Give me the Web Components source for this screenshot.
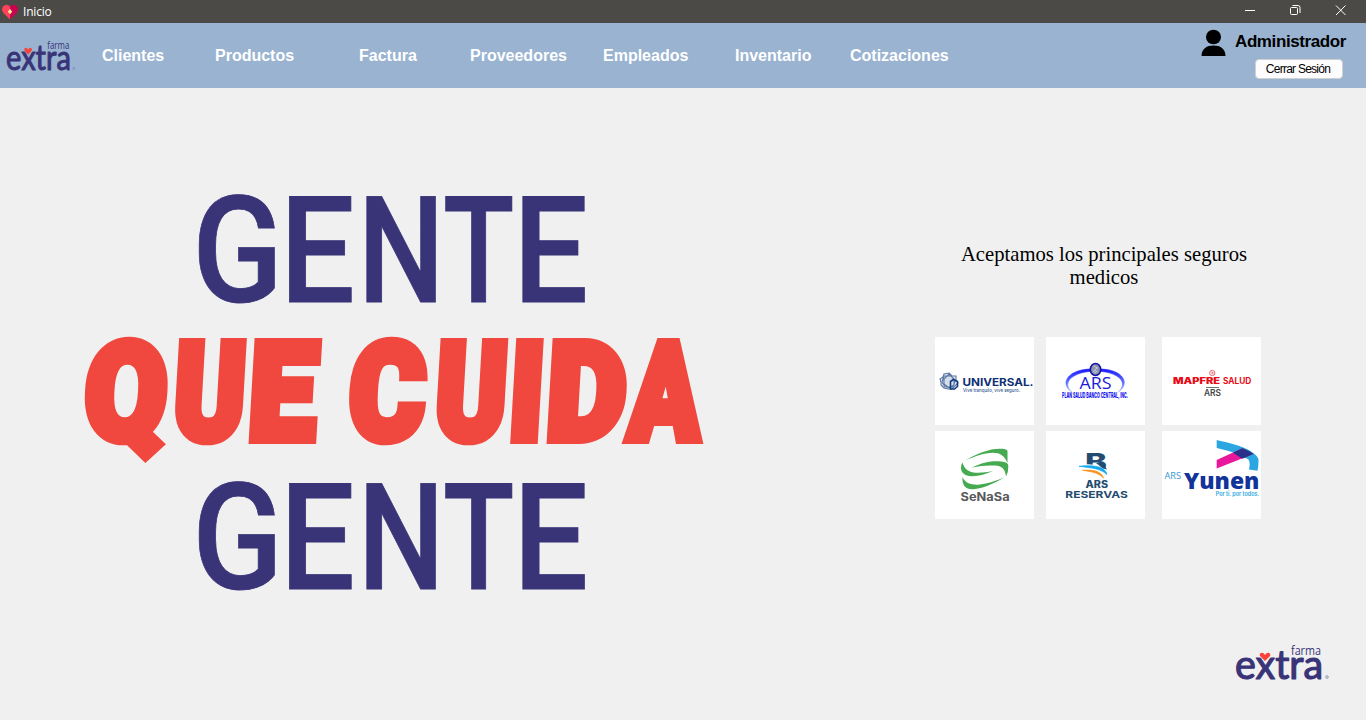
<!DOCTYPE html>
<html lang="es">
<head>
<meta charset="utf-8">
<title>Inicio</title>
<style>
html,body{margin:0;height:100%;overflow:hidden;background:#f0f0f0}
</style>
</head>
<body>
<app-window></app-window>
<script>
const define = (name, html, init) => {
  const tpl = document.createElement('template');
  tpl.innerHTML = html;
  customElements.define(name, class extends HTMLElement {
    constructor() {
      super();
      this.attachShadow({mode: 'open'}).append(tpl.content.cloneNode(true));
    }
    connectedCallback() { if (init) init(this); }
  });
};

define('title-bar', `<style>
:host{display:flex;height:23px;background:#4b4a47;color:#fff;align-items:center;font:12px "Open Sans","Noto Sans",sans-serif;box-sizing:border-box;padding-left:2px}
.name{margin-left:5px;flex:1;line-height:23px;letter-spacing:-.2px}
.ctl{display:flex;width:137px;height:23px}
.ctl svg{display:block}
</style>
<svg width="16" height="16" viewBox="0 0 16 16"><path d="M8 15.5L1.5 9Q-1.2 5.5 1 2.4Q4.500-1 8 2.500z" fill="#ff4257"/><path d="M8 15.500L14.500 9Q17.200 5.500 15 2.400Q11.500-1 8 2.500z" fill="#c9034f"/><path d="M7.200 5.500h1.800v1.200h1v1.800H9v1.200H7.200V8.500H6V6.700h1.200z" fill="#ffeb9c"/></svg>
<span class="name"><slot></slot></span>
<div class="ctl"><svg width="137" height="23" viewBox="0 0 137 23" fill="none" stroke="#fff" stroke-width="1"><path d="M16 10.500h10"/><rect x="61.500" y="7.500" width="7" height="7" rx="1"/><path d="M63.500 5.500h5.500q2 0 2 2v5.500"/><path d="M107 5.500l9.500 9.500M116.500 5.500l-9.500 9.500"/></svg></div>`);

define('extra-logo', `<style>
:host{display:block}
svg{display:block;width:100%;height:100%;overflow:visible}
text{fill:#393478}
</style>
<svg viewBox="0 0 93 36" preserveAspectRatio="none">
<text x="0" y="33.700" font-family="Lato,sans-serif" font-weight="400" font-size="40" stroke="#393478" stroke-width="1.200" stroke-linejoin="round" textLength="88" lengthAdjust="spacingAndGlyphs">extra</text>
<text x="56" y="9.500" font-family="'Open Sans',sans-serif" font-size="12" textLength="30" lengthAdjust="spacingAndGlyphs">farma</text>
<circle cx="92" cy="32" r="1.300" fill="none" stroke="#8580ad" stroke-width=".8"/>
<path d="M30 16L25 11Q24 8.200 26.500 7.700Q29 7.700 30 10Q31 7.700 33.500 7.700Q36 8.200 35 11z" fill="#fa423b"/>
</svg>`);

define('nav-item', `<style>:host{display:block;color:#fff;font:bold 16px/20px "Liberation Sans",Arial,sans-serif;white-space:nowrap}</style><slot></slot>`);

define('user-panel', `<style>
:host{display:grid;grid-template-columns:34px 1fr;width:165px;height:65px;box-sizing:border-box;padding-top:5px}
svg{display:block}
.who{font:bold 17px/20px "Liberation Sans",Arial,sans-serif;color:#000;letter-spacing:-.4px;padding-top:4px;white-space:nowrap}
button{display:block;box-sizing:border-box;width:88px;height:20px;margin:7px 0 0 20px;padding:0 2px 0 0;border:1px solid #d0d0d0;border-radius:4px;background:#fdfdfd;color:#000;font:12px/18px "Liberation Sans",Arial,sans-serif;letter-spacing:-.75px}
.right{display:flex;flex-direction:column}
</style>
<svg width="26" height="30" viewBox="0 0 26 30"><ellipse cx="12.500" cy="9" rx="7.500" ry="7.300"/><path d="M.5 28C.5 20.500 6 17.500 12.500 17.500S24.500 20.500 24.500 28z"/></svg>
<div class="right"><div class="who"><slot></slot></div><button>Cerrar Sesión</button></div>`);

define('nav-bar', `<style>
:host{display:flex;height:65px;background:#99b3d1;box-sizing:border-box;padding-left:6px}
extra-logo{width:68.500px;height:31px;margin-top:18px}
nav{display:grid;grid-template-columns:113px 144px 111px 133px 132px 115px 110px;margin-left:27.500px;padding-top:23px;flex:1}
</style>
<extra-logo></extra-logo>
<nav><nav-item>Clientes</nav-item><nav-item>Productos</nav-item><nav-item>Factura</nav-item><nav-item>Proveedores</nav-item><nav-item>Empleados</nav-item><nav-item>Inventario</nav-item><nav-item>Cotizaciones</nav-item></nav>
<user-panel>Administrador</user-panel>`);

/* Each letter of a line is stretched to an ink box: "left,right" pairs, "_" for a space. */
define('hero-slogan', `<style>
:host{display:block}
svg{display:block;overflow:visible}
text{font-family:Roboto,sans-serif;stroke-linejoin:miter}
</style>
<svg width="640" height="420" viewBox="70 180 640 420">
<text data-y="302" data-w="500" data-size="149" data-stroke="0.8" fill="#393478" stroke="#393478" data-box="198,275.500 288.300,352.500 365.700,436 445,512.700 521.700,585.700">GENTE</text>
<text data-y="444.200" data-w="900" data-size="135" data-stroke="10" data-skew="-3.300" fill="#f0483e" stroke="#f0483e" data-box="81,165.500 171.500,242.500 248,317.500 _ 345.500,425.500 433,504 509,539 546,624.500 621.700,703.700">QUE CUIDA</text>
<text data-y="589" data-w="500" data-size="149" data-stroke="0.8" fill="#393478" stroke="#393478" data-box="198,275.500 288.300,352.500 365.700,436 445,512.700 521.700,585.700">GENTE</text>
</svg>`, host => {
  const ctx = document.createElement('canvas').getContext('2d');
  host.shadowRoot.querySelectorAll('text').forEach(t => {
    const d = t.dataset, s = +d.stroke, chars = [...t.textContent], boxes = d.box.split(' ');
    ctx.font = `${d.w} ${d.size}px Roboto`;
    t.textContent = '';
    t.setAttribute('transform', `translate(0 ${+d.y - s / 2}) skewX(${d.skew || 0})`);
    t.setAttribute('font-size', d.size);
    t.setAttribute('font-weight', d.w);
    t.setAttribute('stroke-width', s);
    chars.forEach((c, i) => {
      if (c === ' ') { t.append(' '); return; }
      const [l, r] = boxes[i].split(',').map(Number);
      const m = ctx.measureText(c);
      const k = (r - l - s) / (m.actualBoundingBoxRight + m.actualBoundingBoxLeft);
      const e = document.createElementNS('http://www.w3.org/2000/svg', 'tspan');
      e.textContent = c;
      e.setAttribute('x', l + s / 2 + m.actualBoundingBoxLeft * k);
      e.setAttribute('textLength', m.width * k);
      e.setAttribute('lengthAdjust', 'spacingAndGlyphs');
      t.append(e);
    });
  });
});

define('insurer-card', `<style>:host{display:block;width:99px;height:88px;background:#fff}::slotted(svg){display:block}</style><slot></slot>`);

define('insurer-panel', `<style>
:host{display:block;width:346px}
p{margin:0 8px 0 0;font:20.650px/23px "Liberation Serif","Times New Roman",serif;text-align:center;color:#000;white-space:nowrap}
.grid{display:grid;grid-template-columns:111px 116px 99px;grid-auto-rows:88px;row-gap:6px;margin-top:48px}
text{font-family:Inter,sans-serif}
</style>
<p>Aceptamos los principales seguros<br>medicos</p>
<div class="grid">
<insurer-card><svg width="99" height="88">
<g fill="#c5d1e4" fill-opacity=".5" stroke="#5a76a4" stroke-width="1.100"><path d="M14 36l3 3 4 0v4l2 3-3 3-3 3-4 0-4-1-3-3 0-3-1-3 3-2 1-3z"/><path d="M9 39h7l4 5-2 6h-8l-3-5zM14 37l5 5v6l-5 3-5-4v-5z"/></g>
<path d="M15.500 44.500l3-2 4 2v5l-3 2.500h-4z" fill="none" stroke="#123c7e" stroke-width="1.600"/>
<text x="27.500" y="49" font-size="10.300" font-weight="700" fill="#0d2f73" textLength="71" lengthAdjust="spacingAndGlyphs">UNIVERSAL.</text>
<text x="28" y="54.800" font-size="5" font-weight="500" fill="#34558e" textLength="57" lengthAdjust="spacingAndGlyphs">Vive tranquilo, vive seguro.</text></svg></insurer-card>
<insurer-card><svg width="99" height="88">
<defs><linearGradient id="ring" x2="0" y2="1"><stop offset="0" stop-color="#1717ff"/><stop offset=".6" stop-color="#5f70ff"/><stop offset="1" stop-color="#b5c4ff"/></linearGradient></defs>
<path d="M26 55C15 49 18 33 45 32H54C81 33 83 49 72 55C82 47 75 36 54 34.300H45C24 36 16 47 26 55z" fill="url(#ring)" stroke="url(#ring)" stroke-width=".7"/>
<ellipse cx="49.500" cy="32.500" rx="5.200" ry="6" fill="#8d93ad" stroke="#1111a8" stroke-width="1.600"/><path d="M47.500 29l4 2-3 2 3 2M47 34l3 2" fill="none" stroke="#d5d7df" stroke-width=".8"/>
<text x="33.500" y="52" font-size="17" style="font-family:'Open Sans'" fill="#1a1ad8" textLength="32" lengthAdjust="spacingAndGlyphs">ARS</text>
<text x="16" y="61.400" font-size="7.800" font-weight="800" fill="#1414ef" textLength="66" lengthAdjust="spacingAndGlyphs">PLAN SALUD BANCO CENTRAL, INC.</text></svg></insurer-card>
<insurer-card><svg width="99" height="88">
<circle cx="50.300" cy="36" r="2.700" fill="none" stroke="#eb6670" stroke-width=".9"/><path d="M48.500 35h2v2h2M49 37.500l3-3" stroke="#eb6670" stroke-width=".7" fill="none"/>
<text x="11" y="47.300" font-size="8.300" font-weight="900" fill="#e80b17" textLength="47" lengthAdjust="spacingAndGlyphs">MAPFRE</text>
<text x="61" y="47.300" font-size="8.300" font-weight="700" fill="#e80b17" textLength="28.300" lengthAdjust="spacingAndGlyphs">SALUD</text>
<path d="M44 50.500h13" stroke="#69746f"/>
<text x="42" y="59" font-size="8.300" font-weight="600" fill="#454545" textLength="17" lengthAdjust="spacingAndGlyphs">ARS</text></svg></insurer-card>
<insurer-card><svg width="99" height="88">
<g fill="#45aa50"><path d="M30 29.500C43 22 56 17 67 17.800Q72 18 72.500 20V32C69 24 65 22 58 21.800C49 22 41 25 30 29.500z"/><path d="M27.500 31.500C29 38 34 41.500 41 41.700C47 42 52 41 58 40C50 43.500 42 46 34 45Q26 43.500 26 37Q25.800 34 27.500 31.500z"/><path d="M37 36.500C48 31 58 29.500 66 30.500Q74 31 73.300 35.500Q73.500 41 71 45.500C70 38 67 35 60 34.600C52 34 45 35 37 36.500z"/><path d="M27.500 46C30 52 36 54 43 53.700C52 53 60 50 69.500 46.500C58 53 48 57.500 38 58.200Q26.500 58.500 27.500 46z"/></g>
<text x="25.600" y="69.800" font-size="12" font-weight="700" fill="#58595b" textLength="49" lengthAdjust="spacingAndGlyphs">SeNaSa</text></svg></insurer-card>
<insurer-card><svg width="99" height="88">
<text x="39" y="38.500" font-size="23" font-weight="800" fill="#234c70" textLength="22" lengthAdjust="spacingAndGlyphs">B</text>
<path d="M32 34Q53 31 61.500 39.500V44L38 42z" fill="#fff"/><path d="M50 32h5q4 2 6 6.500l-4-1z" fill="#234c70"/>
<path d="M33 35.300C47 34 59 35 61 43.500C55 37.500 46 37 33 35.300z" fill="#14a9ef" stroke="#14a9ef" stroke-width=".8"/>
<path d="M36.500 39.300C47 38.500 55 40 57.500 47C52 41.500 47 41 36.500 39.300z" fill="#f99223" stroke="#f99223" stroke-width=".8"/>
<text x="39.500" y="57" font-size="9.700" font-weight="800" fill="#234c70" textLength="22.500" lengthAdjust="spacingAndGlyphs">ARS</text>
<text x="19.300" y="66.700" font-size="9.500" font-weight="700" fill="#234c70" textLength="62.500" lengthAdjust="spacingAndGlyphs">RESERVAS</text></svg></insurer-card>
<insurer-card><svg width="99" height="88">
<path d="M54.700 9C68 12 80 15 88 19.700Q97 25 96.500 30Q96.500 35 95.500 39.700L87 38.500Q88.500 32 86.500 28.500Q77 22 54.700 17z" fill="#2aa6e0"/>
<path d="M54.700 29L80.300 17.300L91.300 23L54.700 37.500z" fill="#e9179b"/><path d="M71 21.700L80.300 17.300Q86 19 91.300 23L80.300 27.800z" fill="#2b3186"/>
<text x="2.500" y="48" font-size="9.300" style="font-family:'Open Sans'" fill="#3498d3" textLength="16.500" lengthAdjust="spacingAndGlyphs">ARS</text>
<text x="22" y="57.700" font-size="22" style="font-family:'Open Sans'" font-weight="800" fill="#11339a" textLength="75.500" lengthAdjust="spacingAndGlyphs">Yunen</text>
<text x="53.700" y="64.700" font-size="5.500" font-weight="600" fill="#2aa6e0" textLength="43.500" lengthAdjust="spacingAndGlyphs">Por ti. por todos.</text></svg></insurer-card>
</div>`);

define('app-window', `<style>
:host{display:flex;flex-direction:column;height:720px;width:1366px;background:#f0f0f0}
main{flex:1;display:grid;grid-template-columns:865px 346px;padding:92px 0 0 70px;box-sizing:border-box;grid-template-rows:420px}
insurer-panel{padding-top:63px}
footer{display:flex;justify-content:flex-end;padding:0 38px 39px 0}
footer extra-logo{width:93px;height:36px}
</style>
<title-bar>Inicio</title-bar>
<nav-bar></nav-bar>
<main><hero-slogan></hero-slogan><insurer-panel></insurer-panel></main>
<footer><extra-logo></extra-logo></footer>`);
</script>
</body>
</html>
